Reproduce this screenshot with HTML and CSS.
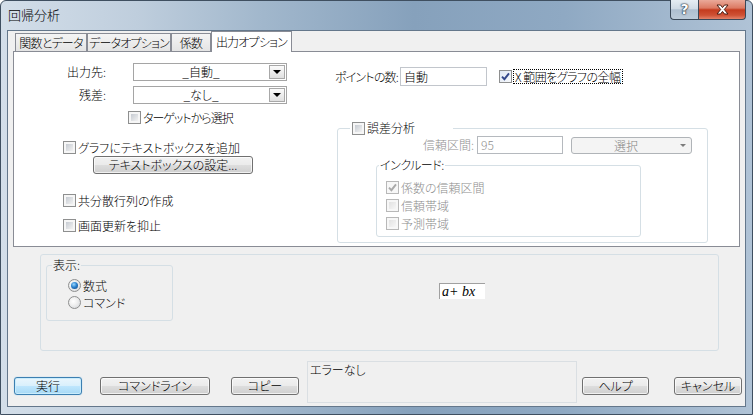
FILE: index.html
```html
<!DOCTYPE html>
<html lang="ja">
<head>
<meta charset="utf-8">
<title>回帰分析</title>
<link rel="stylesheet" href="styles.css">
</head>
<body>
<div class="window">
  <div class="titlebar">
    <div class="title">回帰分析</div>
    <div class="caption">
      <div class="cap-help">?</div>
      <div class="cap-close">
        <svg width="13" height="11" viewBox="0 0 13 11"><path d="M1 1 H4.5 L6.5 3.6 L8.5 1 H12 L8.3 5.5 L12 10 H8.5 L6.5 7.4 L4.5 10 H1 L4.7 5.5 Z" fill="#fff" stroke="#4a1d12" stroke-width="1" stroke-linejoin="round"/></svg>
      </div>
    </div>
  </div>
  <div class="client">
    <div class="tabs">
      <div class="tab t1">関数とデータ</div>
      <div class="tab t2">データオプション</div>
      <div class="tab t3">係数</div>
      <div class="tab active">出力オプション</div>
    </div>
    <div class="panel">
      <div class="col-left">
        <div class="field-row">
          <span class="lbl">出力先:</span>
          <div class="combo"><span class="combo-text">_自動_</span><span class="combo-btn"><i class="tri"></i></span></div>
        </div>
        <div class="field-row">
          <span class="lbl">残差:</span>
          <div class="combo"><span class="combo-text">_なし_</span><span class="combo-btn"><i class="tri"></i></span></div>
        </div>
        <div class="check r3"><span class="cb"></span><span class="tight">ターゲットから選択</span></div>
        <div class="check r4"><span class="cb"></span>グラフにテキストボックスを追加</div>
        <div class="btn r5">テキストボックスの設定...</div>
        <div class="check r6"><span class="cb"></span>共分散行列の作成</div>
        <div class="check r7"><span class="cb"></span>画面更新を抑止</div>
      </div>
      <div class="col-right">
        <div class="points-row">
          <span class="lbl-points">ポイントの数:</span>
          <div class="textbox points">自動</div>
          <span class="cb checked"><svg width="9" height="9" viewBox="0 0 9 9"><path d="M1 4.6 L3.4 7.2 L8 1.3" fill="none" stroke="#33478a" stroke-width="1.9"/></svg></span>
          <span class="focus-label">X 範囲をグラフの全幅</span>
        </div>
        <fieldset class="group err">
          <legend><span class="cb"></span>誤差分析</legend>
          <div class="ci-row">
            <span class="lbl-ci">信頼区間:</span>
            <div class="textbox ci">95</div>
            <div class="dd"><span class="dd-text">選択</span><i class="tri gray"></i></div>
          </div>
          <fieldset class="group include">
            <legend>インクルード:</legend>
            <div class="check dis first"><span class="cb dis checked"><svg width="9" height="9" viewBox="0 0 9 9"><path d="M1 4.6 L3.4 7.2 L8 1.3" fill="none" stroke="#a9a9a9" stroke-width="1.9"/></svg></span>係数の信頼区間</div>
            <div class="check dis"><span class="cb dis"></span>信頼帯域</div>
            <div class="check dis"><span class="cb dis"></span>予測帯域</div>
          </fieldset>
        </fieldset>
      </div>
    </div>
    <div class="display">
      <fieldset class="group show">
        <legend>表示:</legend>
        <div class="radio-row first"><span class="rb on"></span>数式</div>
        <div class="radio-row"><span class="rb"></span>コマンド</div>
      </fieldset>
      <div class="formula">a+ bx</div>
    </div>
    <div class="bottom">
      <div class="btn default b-run">実行</div>
      <div class="btn b-cmd">コマンドライン</div>
      <div class="btn b-copy">コピー</div>
      <div class="status">エラーなし</div>
      <div class="btn b-help">ヘルプ</div>
      <div class="btn b-cancel">キャンセル</div>
    </div>
  </div>
</div>
</body>
</html>
```
FILE: styles.css
```css
* { box-sizing: border-box; }
html, body { margin: 0; padding: 0; }
body {
  width: 753px; height: 415px; overflow: hidden; background: #fff;
  font-family: "Noto Sans CJK JP", "Noto Sans", sans-serif;
  font-size: 12px; line-height: 14px; color: #000; font-weight: 300;
  font-feature-settings: "palt";
}
.window {
  width: 753px; height: 415px; display: flex; flex-direction: column;
  border: 1px solid #3f4f60; border-radius: 6px 6px 0 0;
  background: linear-gradient(to right, #d3dee9 0%, #bfcedd 18%, #a1b7cc 35%, #86a1bc 55%, #8fa9c3 75%, #b0c3d6 100%);
}
.titlebar { height: 29px; display: flex; align-items: flex-start; flex-shrink: 0; }
.title { margin: 7px 0 0 7px; font-size: 13px; line-height: 14px; }
.caption { margin-left: auto; margin-right: 6px; margin-top: -1px; display: flex; }
.cap-help {
  width: 28px; height: 20px; border: 1px solid #3a4858; border-top: none; border-right: none;
  border-radius: 0 0 0 4px;
  background: linear-gradient(#e6edf3 0%, #d0dbe5 45%, #aebfd0 52%, #bccbd9 100%);
  color: #fff; font: bold 14px/19px "DejaVu Sans", sans-serif; text-align: center;
  text-shadow: 0 0 1px #1d2a38, 0 0 1px #1d2a38, 0 0 2px #1d2a38;
}
.cap-close {
  width: 48px; height: 20px; border: 1px solid #3a4858; border-top: none;
  border-radius: 0 0 4px 0;
  background: linear-gradient(#eaa999 0%, #dc7a63 42%, #c43b1e 52%, #cf5134 80%, #e3836a 100%);
  display: flex; align-items: center; justify-content: center;
}
.client {
  margin: 0 6px; height: 377px; background: #f0f0f0; border: 1px solid #64778b;
  display: flex; flex-direction: column; flex-shrink: 0;
}
.tabs {
  display: flex; align-items: flex-end; height: 21px; margin-left: 7px; margin-bottom: -1px;
  position: relative; z-index: 1; flex-shrink: 0;
}
.tab {
  height: 18px; margin-bottom: 1px; border: 1px solid #898c95; border-bottom: none;
  background: linear-gradient(#f4f4f4, #e4e4e4); text-align: center; line-height: 17px;
  white-space: nowrap; letter-spacing: -0.8px; overflow: hidden;
}
.t1 { width: 72px; }
.t2 { width: 84px; }
.t3 { width: 40px; }
.tab.active { width: 81px; height: 21px; margin-bottom: 0; background: #fff; line-height: 19px; }
.panel {
  margin-left: 5px; width: 727px; height: 196px; background: #fff; border: 1px solid #898c95;
  display: flex; flex-shrink: 0;
}
.col-left { width: 321px; flex-shrink: 0; padding-top: 11px; }
.col-right { flex: 1; }
.field-row { display: flex; align-items: center; height: 18px; }
.field-row + .field-row { margin-top: 5px; }
.lbl { width: 92px; text-align: right; }
.combo {
  margin-left: 27px; width: 154px; height: 18px; border: 1px solid #a5a5a5; background: #fff; display: flex;
}
.combo-text { flex: 1; text-align: center; line-height: 16px; }
.combo-btn {
  width: 16px; margin: 1px; border: 1px solid #a8a8a8; background: linear-gradient(#fbfbfb, #e0e0e0);
  display: flex; align-items: center; justify-content: center;
}
.tri {
  display: block; width: 0; height: 0;
  border-left: 4px solid transparent; border-right: 4px solid transparent; border-top: 4px solid #000;
}
.tri.gray { border-top-color: #7c7c7c; border-left-width: 3.5px; border-right-width: 3.5px; border-top-width: 3.5px; margin-right: 5px; }
.check { display: flex; align-items: center; height: 13px; gap: 2px; white-space: nowrap; }
.tight { letter-spacing: -1px; }
.cb {
  width: 13px; height: 13px; border: 1px solid #8e8f8f; background: #f6f6f6; padding: 2px; flex-shrink: 0;
  display: flex; align-items: center; justify-content: center;
}
.cb::before {
  content: ""; display: block; width: 7px; height: 7px;
  background: linear-gradient(135deg, #c6cbd2, #f2f2f2);
}
.cb.checked { padding: 1px; background: linear-gradient(135deg, #dfe7f3, #f7f9fc); }
.cb.checked::before { display: none; }
.cb.dis { border-color: #b8b8b8; background: #f7f7f7; }
.cb.dis::before { background: linear-gradient(135deg, #e2e2e2, #f6f6f6); }
.cb.dis.checked { background: #f7f7f7; }
.r3 { margin-top: 7px; margin-left: 114px; }
.r4 { margin-top: 17px; margin-left: 49px; }
.r5 { margin-top: 2px; margin-left: 79px; width: 160px; }
.r6 { margin-top: 20px; margin-left: 49px; }
.r7 { margin-top: 12px; margin-left: 49px; }
.btn {
  height: 18px; border: 1px solid #707070; border-radius: 3px; text-align: center; line-height: 16px;
  background: linear-gradient(#f2f2f2 0%, #ebebeb 48%, #dddddd 52%, #cfcfcf 100%);
  box-shadow: inset 0 0 0 1px rgba(255,255,255,0.7); white-space: nowrap;
}
.btn.default {
  border-color: #3c7fb1;
  background: linear-gradient(#eaf6fd 0%, #d9f0fc 48%, #bee6fd 52%, #a7d9f5 100%);
  box-shadow: inset 0 0 0 1px #c9ecfc, 0 0 1px #6ab6e8;
}
.textbox { background: #fff; border: 1px solid #c2c6cc; padding-left: 3px; }
.points-row { display: flex; align-items: center; margin-top: 15px; height: 19px; }
.lbl-points { width: 65px; white-space: nowrap; letter-spacing: -0.8px; }
.points { width: 87px; height: 19px; line-height: 17px; }
.points-row .cb { margin-left: 12px; }
.focus-label { margin-left: 1px; border: 1px dotted #000; padding: 0 1px; line-height: 13px; white-space: nowrap; letter-spacing: -0.5px; }
.group { margin: 0; padding: 0; border: 1px solid #d5dfe5; border-radius: 3px; min-width: 0; }
.group > legend { padding: 0 1px; line-height: 14px; height: 14px; white-space: nowrap; }
.err { margin-top: 35px; margin-left: 2px; width: 371px; height: 122px; }
.err > legend { margin-left: 12px; width: 103px; padding: 0 0 0 2px; display: flex; align-items: center; gap: 2px; }
.ci-row { display: flex; align-items: center; margin-top: 1px; height: 18px; }
.lbl-ci { width: 136px; text-align: right; color: #8f8f8f; }
.ci { margin-left: 3px; width: 86px; height: 18px; line-height: 16px; color: #8f8f8f; border-color: #b5b9be; }
.dd {
  margin-left: 8px; width: 121px; height: 17px; border: 1px solid #b0b4b8; border-radius: 3px;
  background: #f4f4f4; display: flex; align-items: center; color: #858585;
}
.dd-text { flex: 1; text-align: center; line-height: 15px; }
.include { margin-top: 4px; margin-left: 38px; width: 265px; height: 79px; }
.include > legend { margin-left: 2px; letter-spacing: -0.5px; }
.include .check { margin-left: 9px; margin-top: 5px; }
.include .check.first { margin-top: 9px; }
.check.dis { color: #8d8d8d; }
.display {
  margin-top: 7px; margin-left: 32px; width: 679px; height: 97px; border: 1px solid #d5dfe5;
  border-radius: 3px; display: flex; align-items: flex-start; flex-shrink: 0;
}
.show { margin-top: 3px; margin-left: 5px; width: 127px; height: 63px; flex-shrink: 0; }
.show > legend { margin-left: 5px; }
.radio-row { display: flex; align-items: center; gap: 2px; height: 13px; margin-left: 21px; }
.radio-row.first { margin-top: 7px; }
.radio-row + .radio-row { margin-top: 4px; }
.rb {
  width: 13px; height: 13px; border-radius: 50%; border: 1px solid #8e8f8f; flex-shrink: 0;
  background: radial-gradient(circle at 40% 40%, #ffffff 0%, #f0f0f0 40%, #cfd2d6 100%);
  display: flex; align-items: center; justify-content: center;
}
.rb.on::after {
  content: ""; display: block; width: 7px; height: 7px; border-radius: 50%;
  background: radial-gradient(circle at 40% 35%, #9ad8ff 0%, #2b82cf 45%, #0b3d7a 100%);
}
.formula {
  margin-left: 266px; margin-top: 28px; width: 46px; height: 16px; background: #fff;
  border-left: 1px solid #a0a0a0; border-top: 1px solid #a0a0a0;
  font: italic 14px/15px "Liberation Serif", serif; padding-left: 2px; white-space: nowrap;
}
.bottom { display: flex; align-items: flex-start; margin-top: 10px; margin-left: 6px; flex-shrink: 0; }
.bottom .btn { margin-top: 16px; }
.b-run { width: 68px; }
.b-cmd { margin-left: 18px; width: 110px; }
.b-copy { margin-left: 21px; width: 68px; }
.status {
  margin-left: 8px; width: 270px; height: 42px; border: 1px solid #dadfe3; background: #f0f0f0;
  padding: 1px 2px;
}
.b-help { margin-left: 5px; width: 67px; }
.b-cancel { margin-left: 25px; width: 68px; }
```
